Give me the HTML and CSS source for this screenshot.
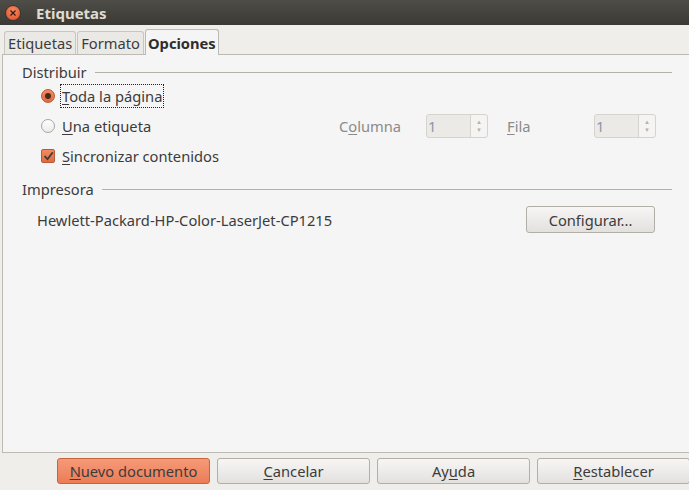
FILE: index.html
```html
<!DOCTYPE html>
<html lang="es">
<head>
  <meta charset="UTF-8">
  <title>Etiquetas</title>
  <link rel="stylesheet" href="styles.css">
</head>
<body>
  <div class="titlebar">
    <span class="close">
      <svg width="8" height="8" viewBox="0 0 8 8"><path d="M1.5 1.5 L6.5 6.5 M6.5 1.5 L1.5 6.5" stroke="#3a1a10" stroke-width="1.3"/></svg>
    </span>
    <span class="title">Etiquetas</span>
  </div>

  <div class="window">
    <div class="tabs">
      <div class="tab">Etiquetas</div>
      <div class="tab">Formato</div>
      <div class="tab active">Opciones</div>
    </div>

    <div class="panel">
      <div class="section-head"><span>Distribuir</span><div class="rule"></div></div>

      <div class="row">
        <span class="radio checked"></span>
        <span class="focus"><u>T</u>oda la página</span>
      </div>
      <div class="row">
        <span class="radio"></span>
        <span class="label-main"><u>U</u>na etiqueta</span>
        <span class="dim col-label">C<u>o</u>lumna</span>
        <div class="spin"><span class="spin-val">1</span><span class="spin-btns">▴<br>▾</span></div>
        <span class="dim fila-label"><u>F</u>ila</span>
        <div class="spin"><span class="spin-val">1</span><span class="spin-btns">▴<br>▾</span></div>
      </div>
      <div class="row">
        <span class="check">
          <svg width="11" height="10" viewBox="0 0 11 10"><path d="M1.5 5 L4.5 8.2 L9.8 1.2" fill="none" stroke="#3d3a36" stroke-width="1.8"/></svg>
        </span>
        <span><u>S</u>incronizar contenidos</span>
      </div>

      <div class="section-head second"><span>Impresora</span><div class="rule"></div></div>

      <div class="printer">
        <span>Hewlett-Packard-HP-Color-LaserJet-CP1215</span>
        <button class="btn config">Configurar...</button>
      </div>
    </div>

    <div class="actions">
      <button class="btn primary"><u>N</u>uevo documento</button>
      <button class="btn"><u>C</u>ancelar</button>
      <button class="btn">Ay<u>u</u>da</button>
      <button class="btn"><u>R</u>establecer</button>
    </div>
  </div>
</body>
</html>
```

FILE: styles.css
```css
* {
  box-sizing: border-box;
  margin: 0;
  padding: 0;
}

body {
  width: 689px;
  height: 490px;
  overflow: hidden;
  background: #f0eeeb;
  font-family: "Noto Sans", "DejaVu Sans", sans-serif;
  font-size: 14.7px;
  color: #3c3c3c;
}

u {
  text-decoration: underline;
  text-underline-offset: 2px;
}

.titlebar {
  height: 25px;
  background: linear-gradient(#4f4d48, #3a3934);
  display: flex;
  align-items: center;
  padding-left: 5px;
}

.close {
  width: 16px;
  height: 16px;
  border-radius: 50%;
  background: radial-gradient(circle at 50% 35%, #f68a63, #df4d24);
  border: 1px solid #3a3630;
  display: flex;
  align-items: center;
  justify-content: center;
}

.title {
  margin-left: 15px;
  color: #dfdbd2;
  font-weight: bold;
  font-size: 15px;
}

.window {
  height: 465px;
  padding-top: 4px;
}

.tabs {
  display: flex;
  align-items: flex-end;
  height: 25px;
  padding-left: 4px;
}

.tab {
  height: 23px;
  padding: 0 3px;
  border: 1px solid #c9c5bf;
  border-bottom: none;
  border-radius: 3px 3px 0 0;
  background: #ebe9e5;
  display: flex;
  align-items: center;
  margin-right: 1px;
}

.tab.active {
  height: 26px;
  margin-bottom: -1px;
  margin-right: 0;
  background: #f5f5f5;
  border-color: #bdb9b3;
  color: #2e2e2e;
  font-weight: bold;
  padding: 0 2px;
  position: relative;
  z-index: 1;
}

.panel {
  margin-left: 2px;
  width: 700px;
  height: 399px;
  background: #f5f5f5;
  border: 1px solid #bdb9b3;
  padding: 8px 0 0 19px;
}

.section-head {
  display: flex;
  align-items: center;
  width: 650px;
  height: 18px;
}

.section-head.second {
  margin-top: 9px;
}

.rule {
  flex: 1;
  height: 1px;
  background: #b4b0aa;
  margin-left: 8px;
}

.row {
  display: flex;
  align-items: center;
  height: 30px;
  padding-left: 19px;
}

.row:first-of-type {
  margin-top: 6px;
}

.radio {
  width: 14px;
  height: 14px;
  border-radius: 50%;
  border: 1px solid #a9a59f;
  background: linear-gradient(#ffffff, #ecebe8);
  margin-right: 7px;
  position: relative;
}

.radio.checked {
  border-color: #b95a36;
  background: linear-gradient(#f28a62, #e06a41);
}

.radio.checked::after {
  content: "";
  position: absolute;
  left: 3px;
  top: 3px;
  width: 6px;
  height: 6px;
  border-radius: 50%;
  background: #4a2a1e;
}

.focus {
  outline: 1px dotted #222;
  padding: 1px 1px;
  margin-left: -1px;
}

.label-main {
  width: 277px;
}

.dim {
  color: #8b8b8b;
}

.col-label {
  width: 87px;
}

.fila-label {
  margin-left: 19px;
  width: 87px;
}

.spin {
  width: 62px;
  height: 24px;
  display: flex;
  border: 1px solid #d6d3cf;
  border-radius: 3px;
  background: #ebeae7;
}

.spin-val {
  flex: 1;
  color: #8d96a8;
  padding-left: 1px;
  line-height: 22px;
}

.spin-btns {
  width: 17px;
  border-left: 1px solid #d6d3cf;
  background: #f5f4f2;
  font-size: 7px;
  line-height: 8px;
  color: #b5b2ad;
  text-align: center;
  padding-top: 3px;
  border-radius: 0 3px 3px 0;
}

.check {
  width: 14px;
  height: 14px;
  border: 1px solid #b95a36;
  border-radius: 2px;
  background: linear-gradient(#f28a62, #e06a41);
  margin-right: 7px;
  display: flex;
  align-items: center;
  justify-content: center;
}

.printer {
  display: flex;
  align-items: center;
  justify-content: space-between;
  width: 633px;
  padding-left: 15px;
  margin-top: 8px;
}

.btn {
  font-family: inherit;
  font-size: 14.7px;
  color: #3c3c3c;
  height: 26px;
  border: 1px solid #b2aea8;
  border-radius: 3px;
  background: linear-gradient(#f7f6f5, #e3e1de);
  cursor: pointer;
}

.config {
  width: 129px;
  height: 27px;
}

.actions {
  display: flex;
  gap: 7px;
  padding-left: 57px;
  margin-top: 5px;
  width: 720px;
}

.actions .btn {
  width: 153px;
  flex-shrink: 0;
}

.btn.primary {
  background: linear-gradient(#f59a79, #ec7c56);
  border-color: #c5643f;
}
```
